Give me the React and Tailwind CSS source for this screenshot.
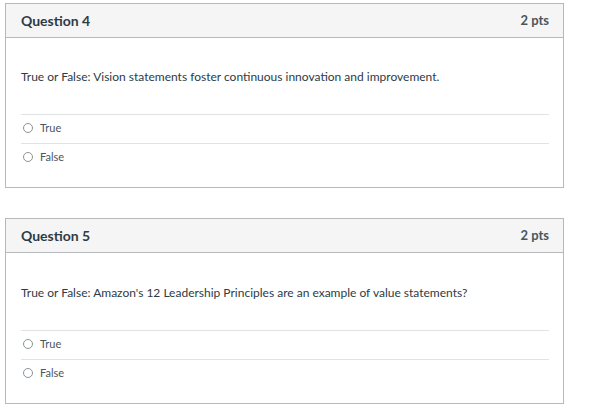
import React from "react";

function Option({ label }) {
  return (
    <div className="flex items-center h-[29px] pb-[3px] border-t border-[#dfe3e6]">
      <span className="ml-[2px] w-[10px] h-[10px] rounded-full border border-[#8a9399] bg-white" />
      <span className="ml-[7px] text-[11px] text-[#4a555c] leading-none">{label}</span>
    </div>
  );
}

function Question({ num, text, className, top = "pt-[30px]" }) {
  return (
    <div className={`w-[559px] border border-[#b5b9bc] bg-white ${className}`}>
      <div className="h-[34px] bg-[#f5f5f5] border-b border-[#b5b9bc] flex items-center justify-between pl-[15px] pr-[14px]">
        <span className="text-[14px] font-bold text-[#2d3b45]">Question {num}</span>
        <span className="text-[13px] font-bold text-[#4a555c]">2 pts</span>
      </div>
      <div className={`pl-[15px] pr-[14px] ${top} pb-[15px]`}>
        <p className="text-[12px] leading-[18px] text-[#2d3b45] mb-[28px]">{text}</p>
        <Option label="True" />
        <Option label="False" />
      </div>
    </div>
  );
}

export default function App() {
  return (
    <div className="w-[590px] h-[408px] bg-white pt-[3px] pl-[5px]" style={{ fontFamily: "Lato, 'Noto Sans', sans-serif" }}>
      <Question num={4} text="True or False: Vision statements foster continuous innovation and improvement." />
      <Question num={5} className="mt-[30px]" top="pt-[31px]" text="True or False: Amazon's 12 Leadership Principles are an example of value statements?" />
    </div>
  );
}
